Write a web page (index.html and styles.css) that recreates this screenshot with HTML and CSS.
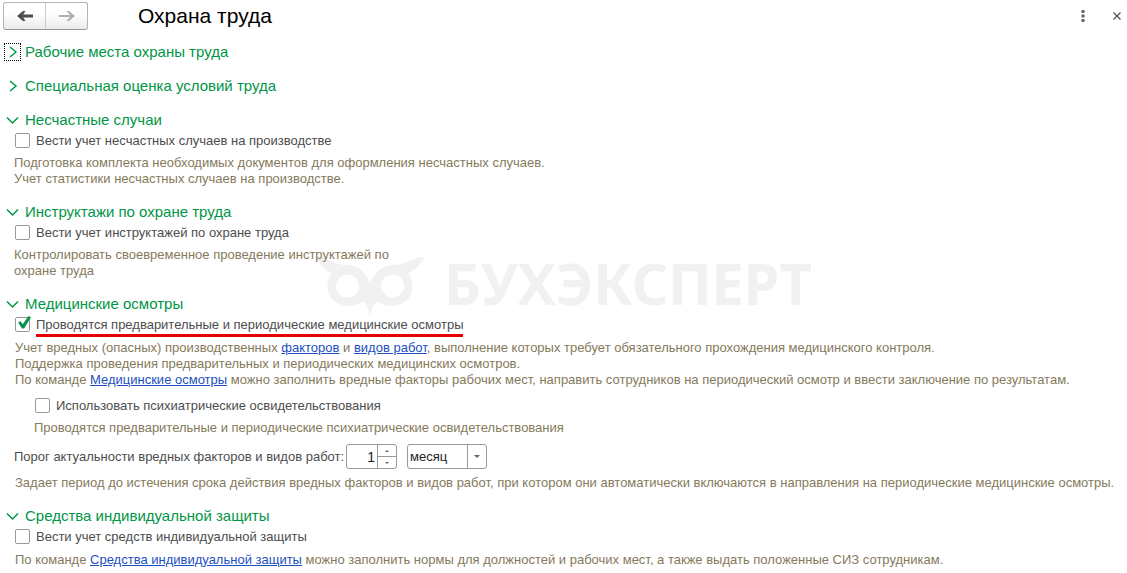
FILE: index.html
```html
<!DOCTYPE html>
<html lang="ru">
  <head>
    <meta charset="utf-8">
    <title>Охрана труда</title>
    <link rel="stylesheet" href="styles.css">
  </head>
  <body>
    <header class="topbar">
      <div class="nav">
        <button type="button" class="nav-btn" aria-label="Назад">
          <svg width="18" height="12" viewBox="0 0 18 12" fill="#4d4d4d"><path d="M1 6L7 1h2.500L7.200 4.500H17v3H7.200L9.500 11H7z"/></svg>
        </button>
        <button type="button" class="nav-btn" aria-label="Вперед">
          <svg width="18" height="12" viewBox="0 0 18 12" fill="#b0b0b0"><path d="M17 6L11 1H8.500l3.500 4H1v2h11l-3.500 4H11z"/></svg>
        </button>
      </div>
      <h1>Охрана труда</h1>
      <div class="window-tools">
        <button type="button" class="tool" aria-label="Еще">
          <svg width="6" height="14" viewBox="0 0 6 14" fill="#6b6b6b"><circle cx="3" cy="2.500" r="1.800"/><circle cx="3" cy="7" r="1.800"/><circle cx="3" cy="11.500" r="1.800"/></svg>
        </button>
        <button type="button" class="tool" aria-label="Закрыть">
          <svg width="10" height="10" viewBox="0 0 10 10"><path d="M1.500 1.500l7 7M8.500 1.500l-7 7" stroke="#555" stroke-width="1.300"/></svg>
        </button>
      </div>
    </header>

    <main>
      <details class="group">
        <summary>
          <span class="mark focused"><svg width="13" height="12" viewBox="0 0 13 12"><path d="M4 1l6 5-6 5"/></svg></span>
          <h2>Рабочие места охраны труда</h2>
        </summary>
      </details>

      <details class="group">
        <summary>
          <span class="mark"><svg width="13" height="12" viewBox="0 0 13 12"><path d="M4 1l6 5-6 5"/></svg></span>
          <h2>Специальная оценка условий труда</h2>
        </summary>
      </details>

      <details class="group" open>
        <summary>
          <span class="mark"><svg width="13" height="12" viewBox="0 0 13 12"><path d="M1 3.500L6.500 9 12 3.500"/></svg></span>
          <h2>Несчастные случаи</h2>
        </summary>
        <label class="check"><input type="checkbox"><span>Вести учет несчастных случаев на производстве</span></label>
        <p class="note">Подготовка комплекта необходимых документов для оформления несчастных случаев.<br>Учет статистики несчастных случаев на производстве.</p>
      </details>

      <details class="group" open>
        <summary>
          <span class="mark"><svg width="13" height="12" viewBox="0 0 13 12"><path d="M1 3.500L6.500 9 12 3.500"/></svg></span>
          <h2>Инструктажи по охране труда</h2>
        </summary>
        <label class="check"><input type="checkbox"><span>Вести учет инструктажей по охране труда</span></label>
        <p class="note">Контролировать своевременное проведение инструктажей по<br>охране труда</p>
      </details>

      <details class="group" open>
        <summary>
          <span class="mark"><svg width="13" height="12" viewBox="0 0 13 12"><path d="M1 3.500L6.500 9 12 3.500"/></svg></span>
          <h2>Медицинские осмотры</h2>
        </summary>
        <label class="check"><input type="checkbox" checked><span class="marked">Проводятся предварительные и периодические медицинские осмотры</span></label>
        <p class="note rich">Учет вредных (опасных) производственных <a href="#">факторов</a> и <a href="#">видов работ</a>, выполнение которых требует обязательного прохождения медицинского контроля.<br>Поддержка проведения предварительных и периодических медицинских осмотров.<br>По команде <a href="#">Медицинские осмотры</a> можно заполнить вредные факторы рабочих мест, направить сотрудников на периодический осмотр и ввести заключение по результатам.</p>
        <div class="nested">
          <label class="check"><input type="checkbox"><span>Использовать психиатрические освидетельствования</span></label>
          <p class="note">Проводятся предварительные и периодические психиатрические освидетельствования</p>
        </div>
        <div class="field">
          <label for="period">Порог актуальности вредных факторов и видов работ:</label>
          <div class="spin">
            <input type="text" id="period" value="1">
            <div class="spin-btns">
              <button type="button" aria-label="Больше"><svg width="4" height="2" viewBox="0 0 4 2"><path d="M0 2l2-2 2 2z"/></svg></button>
              <button type="button" aria-label="Меньше"><svg width="4" height="2" viewBox="0 0 4 2"><path d="M0 0l2 2 2-2z"/></svg></button>
            </div>
          </div>
          <div class="select">
            <select aria-label="Единица периода">
              <option>месяц</option>
            </select>
            <span class="arrow"><svg width="6" height="3" viewBox="0 0 6 3"><path d="M0 0l3 3 3-3z"/></svg></span>
          </div>
        </div>
        <p class="note rich">Задает период до истечения срока действия вредных факторов и видов работ, при котором они автоматически включаются в направления на периодические медицинские осмотры.</p>
      </details>

      <details class="group" open>
        <summary>
          <span class="mark"><svg width="13" height="12" viewBox="0 0 13 12"><path d="M1 3.500L6.500 9 12 3.500"/></svg></span>
          <h2>Средства индивидуальной защиты</h2>
        </summary>
        <label class="check"><input type="checkbox"><span>Вести учет средств индивидуальной защиты</span></label>
        <p class="note rich">По команде <a href="#">Средства индивидуальной защиты</a> можно заполнить нормы для должностей и рабочих мест, а также выдать положенные СИЗ сотрудникам.</p>
      </details>
    </main>

    <div class="watermark">
      <svg width="110" height="58" viewBox="0 0 110 58">
        <path fill-rule="evenodd" d="M0 0C12 0 16 7 28 8C41 7 50 15 54 27C58 15 67 7 80 8C92 7 97 0 109 0C104 8 100 13 92 16C97 22 98 32 94 39C88 49 74 52 62 45C59 43 56 52 54 58C52 52 49 43 46 45C34 52 20 49 14 39C10 32 11 22 16 16C8 13 4 8 0 0zM31.500 17.500a11.500 11.500 0 1 0 .1 0zM76.500 17.500a11.500 11.500 0 1 0 .1 0z"/>
      </svg>
      <span>БУХЭКСПЕРТ</span>
    </div>
  </body>
</html>
```
FILE: styles.css
```css
body {
  margin: 0;
  background: #fff;
  color: #4d4d4d;
  font-family: "Liberation Sans", Arial, sans-serif;
  font-size: 13px;
  line-height: 16px;
  position: relative;
}

h1, h2, p {
  margin: 0;
  font-weight: normal;
}

button {
  padding: 0;
  border: none;
  background: none;
  display: flex;
  align-items: center;
  justify-content: center;
}

.topbar {
  display: flex;
  align-items: center;
  height: 32px;
  padding: 0 4px 0 3px;
}

.topbar h1 {
  margin-left: 50px;
  color: #000;
  font-size: 21px;
  line-height: 24px;
}

.nav {
  display: flex;
  box-sizing: border-box;
  width: 85px;
  height: 28px;
  border: 1px solid #b3b3b3;
  border-bottom-color: #999;
  border-radius: 3px;
  background: linear-gradient(#fff 40%, #ebebeb);
}

.nav-btn {
  flex: 1;
}

.nav-btn + .nav-btn {
  border-left: 1px solid #ccc;
}

.window-tools {
  display: flex;
  gap: 22px;
  margin-left: auto;
}

.tool {
  width: 12px;
  height: 26px;
}

main {
  padding: 11px 8px 0 6px;
}

.group {
  margin-bottom: 16px;
}

summary {
  display: flex;
  align-items: center;
  height: 18px;
  color: #009646;
  list-style: none;
}

summary h2 {
  margin-left: 6px;
  font-size: 15px;
  line-height: 18px;
}

.mark {
  display: flex;
  width: 13px;
}

.mark path {
  fill: none;
  stroke: #009646;
  stroke-width: 1.5;
}

.focused {
  padding: 1px 0;
  outline: 1px dotted #000;
  outline-offset: 1px;
}

.check {
  display: flex;
  align-items: center;
  width: fit-content;
  height: 17px;
  margin: 3px 0 0 9px;
}

.check input {
  appearance: none;
  box-sizing: border-box;
  width: 15px;
  height: 15px;
  margin: 0 6px 0 0;
  border: 1px solid #999;
  border-radius: 2px;
  position: relative;
}

.check input:checked::after {
  content: "";
  position: absolute;
  left: 1px;
  top: -2px;
  width: 14px;
  height: 13px;
  background: #009646;
  clip-path: polygon(8% 50%, 25% 40%, 42% 64%, 82% 0, 100% 10%, 50% 96%, 36% 96%);
}

/* red marker under the label */
.marked {
  position: relative;
}

.marked::after {
  content: "";
  position: absolute;
  left: 0;
  right: 0;
  bottom: -4px;
  height: 3px;
  background: #e60000;
}

.note {
  margin: 6px 0 0 8px;
  color: #857a5b;
}

.rich {
  margin: 7px 0 0 9px;
}

.note a {
  color: #1d4fbf;
}

.nested {
  margin: 9px 0 0 20px;
}

.nested .check {
  margin-top: 0;
}

.field {
  display: flex;
  align-items: center;
  margin: 8px 0 0 8px;
}

.field + .rich {
  margin-top: 6px;
}

.spin, .select {
  display: flex;
  box-sizing: border-box;
  height: 25px;
  border: 1px solid #999;
  border-radius: 3px;
}

.spin {
  width: 51px;
  margin: 0 10px 0 2px;
}

.spin input {
  flex: 1;
  min-width: 0;
  padding: 0 2px 0 0;
  border: none;
  background: none;
  font: 14px "Liberation Sans", Arial, sans-serif;
  color: #222;
  text-align: right;
}

.spin-btns {
  display: flex;
  flex-direction: column;
  width: 18px;
  border-left: 1px solid #999;
}

.spin-btns button {
  flex: 1;
}

.spin-btns button + button {
  border-top: 1px solid #999;
}

.spin path, .arrow path {
  fill: #666;
}

.select {
  width: 80px;
}

.select select {
  flex: 1;
  min-width: 0;
  appearance: none;
  padding: 0 0 0 2px;
  border: none;
  background: none;
  font: 13px "Liberation Sans", Arial, sans-serif;
  color: #222;
}

.arrow {
  display: flex;
  align-items: center;
  justify-content: center;
  width: 18px;
  border-left: 1px solid #999;
}

.watermark {
  position: absolute;
  left: 316px;
  top: 257px;
  z-index: -1;
  display: flex;
  gap: 18px;
  color: #f1f1f4;
  font-family: "Noto Sans", sans-serif;
  font-size: 57px;
  line-height: 52px;
  font-weight: bold;
}

.watermark path {
  fill: #f1f1f4;
}
```
